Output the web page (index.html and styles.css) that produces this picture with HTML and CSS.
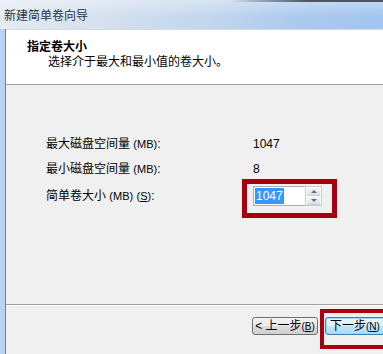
FILE: index.html
```html
<!DOCTYPE html>
<html lang="zh-CN">
<head>
    <meta charset="UTF-8">
    <title>新建简单卷向导</title>
    <link rel="stylesheet" href="styles.css">
</head>
<body>

<div class="window">
    <div class="titlebar">新建简单卷向导</div>

    <div class="frame">
        <div class="content">
            <div class="header">
                <div class="header-title">指定卷大小</div>
                <div class="header-sub">选择介于最大和最小值的卷大小。</div>
            </div>

            <div class="body">
                <div class="grid">
                    <span class="label">最大磁盘空间量 <span class="key">(MB)</span>:</span>
                    <span class="value">1047</span>

                    <span class="label">最小磁盘空间量 <span class="key">(MB)</span>:</span>
                    <span class="value">8</span>

                    <span class="label">简单卷大小 <span class="key">(MB)</span> <span class="key">(<u>S</u>)</span>:</span>
                    <div class="spin">
                        <div class="spin-field"><span class="selected">1047</span></div>
                        <div class="spin-buttons">
                            <div class="spin-btn"><span class="arrow-up"></span></div>
                            <div class="spin-btn"><span class="arrow-down"></span></div>
                        </div>
                    </div>
                </div>
            </div>

            <div class="footer">
                <button class="btn">&lt; 上一步<span class="key">(<u>B</u>)</span></button>
                <div class="next-wrap">
                    <button class="btn btn-default">下一步<span class="key">(<u>N</u>)</span></button>
                </div>
            </div>
        </div>
    </div>
</div>

</body>
</html>
```

FILE: styles.css
```css
html, body { margin: 0; padding: 0; }
body { width: 383px; height: 354px; overflow: hidden; font-family: "Liberation Sans", "Noto Sans CJK SC", sans-serif; font-size: 12px; color: #000; }

.window { width: 383px; height: 354px; display: flex; flex-direction: column; }

/* glass title bar */
.titlebar { height: 29px; box-sizing: border-box; padding: 7px 0 0 4px; line-height: 18px; color: #2a3440;
    background:
        linear-gradient(to right, rgba(72,83,94,0) 60%, #4a5661 80%) top / 100% 2px no-repeat,
        linear-gradient(to bottom, rgba(255,255,255,0.35), rgba(255,255,255,0) 60%),
        linear-gradient(to right, #e4ebf3 0%, #d2dfee 30%, #c2d6ee 55%, #a9c8ee 80%, #a2c4ee 100%); }

.frame { flex: 1; display: flex; border-left: 5px solid #b8d3f6; min-height: 0; }
.content { flex: 1; display: flex; flex-direction: column; border-left: 1px solid #6f8294; background: #f0f0f0; }

.header { height: 56px; box-sizing: border-box; background: #fff; border-top: 1px solid #d6dbe1; border-bottom: 1px solid #a0a0a0; padding: 10px 0 0 21px; }
.header-title { font-weight: bold; line-height: 15px; }
.header-sub { line-height: 15px; padding-left: 21px; }

.body { flex: 1; padding: 51px 0 0 40px; }
.grid { display: grid; grid-template-columns: 207px auto; row-gap: 9px; align-items: center; }
.label, .value { line-height: 16px; white-space: nowrap; }
.key { font-size: 11px; }

/* spin box with annotation frame */
.spin { position: relative; display: flex; width: 69px; height: 20px; }
.spin::after { content: ""; position: absolute; left: -11px; top: -7px; width: 95px; height: 39px; box-sizing: border-box; border: 5px solid #a5000f; }
.spin-field { flex: 1; background: #fff; border: 1px solid #abadb3; border-right: none; padding: 1px 0 0 1px; }
.selected { display: inline-block; background: #3399ff; color: #fff; line-height: 16px; padding: 0 1px; }
.spin-buttons { width: 17px; display: flex; flex-direction: column; border: 1px solid #c8cbd0; box-sizing: border-box; }
.spin-btn { flex: 1; display: flex; align-items: center; justify-content: center; background: linear-gradient(#f4f5f7, #dde1e6); border: 1px solid #fff; border-bottom-color: #c9ced4; }
.arrow-up { width: 0; height: 0; border-left: 3px solid transparent; border-right: 3px solid transparent; border-bottom: 3px solid #5a6f86; }
.arrow-down { width: 0; height: 0; border-left: 3px solid transparent; border-right: 3px solid transparent; border-top: 3px solid #5a6f86; }

.footer { height: 37px; border-top: 1px solid #a0a0a0; box-shadow: inset 0 1px 0 #fff; display: flex; align-items: flex-start; gap: 7px; padding: 12px 0 0 246px; }
.btn { height: 18px; width: 66px; padding: 0; white-space: nowrap; font-family: inherit; font-size: 12px; line-height: 14px; color: #000; border: 1px solid #707070; border-radius: 3px;
    background: linear-gradient(#f2f2f2 0%, #ebebeb 50%, #dddddd 51%, #cfcfcf 100%); }
.btn .key { font-size: 10px; }
.btn-default { width: 66px; border-color: #3c7fb1; text-align: left; padding-left: 4px; box-shadow: inset 0 0 0 1px #a6d8f5;
    background: linear-gradient(#eaf6fd 0%, #d9f0fc 50%, #bee6fd 51%, #a7d9f5 100%); }
.next-wrap { position: relative; }
.next-wrap::after { content: ""; position: absolute; left: -5px; top: -8px; width: 80px; height: 40px; border: 4px solid #a5000f; box-sizing: border-box; }
```
